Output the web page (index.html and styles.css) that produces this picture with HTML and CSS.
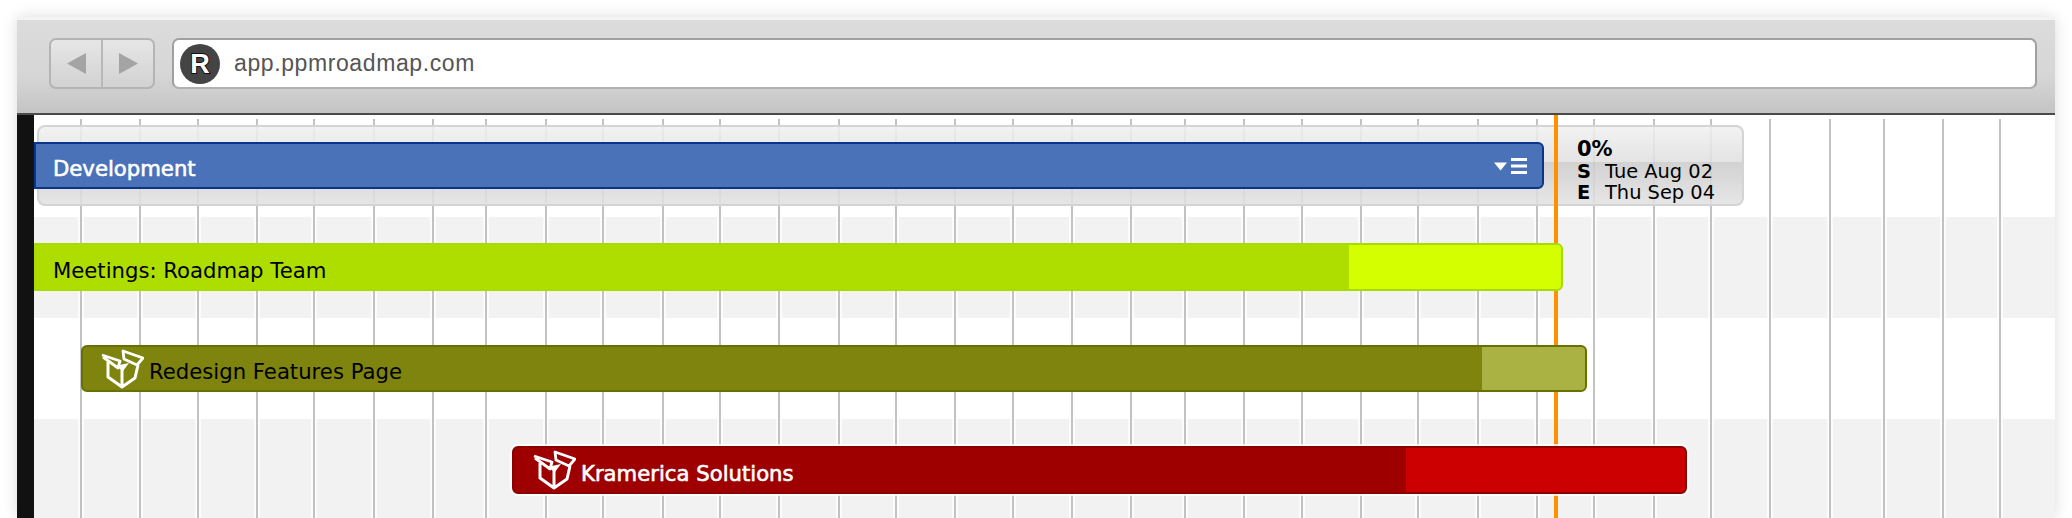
FILE: index.html
```html
<!DOCTYPE html>
<html lang="en">
<head>
  <meta charset="UTF-8" />
  <title>PPM Roadmap</title>
  <link rel="stylesheet" href="styles.css">
</head>
<body>

  <svg class="defs" width="0" height="0">
    <symbol id="box" viewBox="0 0 44 40">
      <path d="M8 13V28L22 38L35 29L38 16M22 20V38" fill="none" stroke="#fff" stroke-width="3" stroke-linejoin="round"/>
      <path d="M2 6L20 12L18 19L3 8M23 2L43 9L37 16L24 10Z" fill="none" stroke="#fff" stroke-width="2.800" stroke-linejoin="round"/>
      <path d="M15 17L29 14L23 22Z" fill="#fff"/>
    </symbol>
  </svg>

  <div class="window">

    <!-- Browser toolbar -->
    <div class="toolbar">
      <div class="nav">
        <button class="nav-btn"><svg width="19" height="21" viewBox="0 0 20 22"><path d="M20 0V22L0 11Z"/></svg></button>
        <button class="nav-btn"><svg width="19" height="21" viewBox="0 0 20 22"><path d="M0 0V22L20 11Z"/></svg></button>
      </div>
      <div class="address">
        <span class="logo">R</span>
        <span class="url">app.ppmroadmap.com</span>
      </div>
    </div>

    <div class="chart">
      <div class="rail"></div>

      <div class="rows">
        <!-- Week lines behind the bars -->
        <div class="gridlines">
          <i></i><i></i><i></i><i></i><i></i><i></i><i></i><i></i><i></i><i></i><i></i><i></i>
          <i></i><i></i><i></i><i></i><i></i><i></i><i></i><i></i><i></i><i></i><i></i><i></i>
          <i></i><i></i><i></i><i></i><i></i><i></i><i></i><i></i><i></i><i></i>
        </div>

        <!-- Today marker -->
        <div class="today"></div>

        <div class="row row-first">
          <div class="card">
            <div class="bar bar-dev">
              <div class="done">
                <span class="label">Development</span>
                <span class="menu">
                  <svg width="34" height="16" viewBox="0 0 34 16">
                    <path d="M0 4.500H13L6.500 12.500Z" fill="#fff"/>
                    <path d="M17 0H33V3H17ZM17 6.500H33V9.500H17ZM17 13H33V16H17Z" fill="#fff"/>
                  </svg>
                </span>
              </div>
            </div>
            <div class="info">
              <div class="pct">0%</div>
              <div class="date"><b>S</b><span>Tue Aug 02</span></div>
              <div class="date"><b>E</b><span>Thu Sep 04</span></div>
            </div>
          </div>
        </div>

        <div class="row row-alt row-meet">
          <div class="bar bar-meet">
            <div class="done"><span class="label">Meetings: Roadmap Team</span></div>
            <div class="rest"></div>
          </div>
        </div>

        <div class="row row-redesign">
          <div class="bar bar-redesign">
            <div class="done">
              <svg class="box" width="44" height="40"><use href="#box"/></svg>
              <span class="label">Redesign Features Page</span>
            </div>
            <div class="rest"></div>
          </div>
        </div>

        <div class="row row-alt row-kram">
          <div class="bar bar-kram">
            <div class="done">
              <svg class="box" width="44" height="40"><use href="#box"/></svg>
              <span class="label">Kramerica Solutions</span>
            </div>
            <div class="rest"></div>
          </div>
        </div>
      </div>
    </div>

  </div>

</body>
</html>
```

FILE: styles.css
```css
/* Page */
body {
  margin: 0;
  height: 518px;
  overflow: hidden;
  background-color: #fff;
  font-family: "DejaVu Sans", Verdana, sans-serif;
  color: #000;
}

.defs {
  position: absolute;
}

.window {
  margin: 17px 17px 0;
  border-top: 3px solid #f4f4f4;
  box-shadow: 0 0 14px rgba(0,0,0,0.14);
}

/* Browser toolbar */
.toolbar {
  display: flex;
  gap: 17px;
  height: 95px;
  box-sizing: border-box;
  padding: 18px 18px 0 32px;
  background: linear-gradient(#dcdcdc, #d6d6d6 60%, #c4c4c4);
  border-bottom: 2px solid #4a4a4a;
}

.nav {
  display: flex;
  width: 106px;
  height: 51px;
  box-sizing: border-box;
  border: 2px solid #b4b4b4;
  border-radius: 7px;
  background: linear-gradient(#e6e6e6, #d2d2d2);
}

.nav-btn {
  flex: 1;
  display: flex;
  align-items: center;
  justify-content: center;
  padding: 0;
  border: none;
  background: none;
}

.nav-btn + .nav-btn {
  border-left: 2px solid #b8b8b8;
}

.nav-btn svg {
  fill: #a4a4a4;
}

.address {
  flex: 1;
  display: flex;
  align-items: center;
  gap: 14px;
  height: 51px;
  box-sizing: border-box;
  padding-left: 6px;
  background-color: #fff;
  border: 2px solid #a0a0a0;
  border-bottom-color: #b0b0b0;
  border-radius: 7px;
}

.logo {
  width: 40px;
  height: 40px;
  border-radius: 50%;
  background-color: #444;
  color: #fff;
  font: bold 27px/40px "Liberation Sans", Arial, sans-serif;
  text-align: center;
  -webkit-text-stroke: 2px #111;
  paint-order: stroke fill;
}

.url {
  font: 23px "Liberation Sans", Helvetica, Arial, sans-serif;
  color: #555;
  letter-spacing: 0.6px;
}

/* Chart */
.chart {
  display: flex;
}

.rail {
  width: 17px;
  background-color: #111;
}

.rows {
  flex: 1;
  position: relative;
}

.row {
  box-sizing: border-box;
}

.row-alt {
  background-color: #f2f2f2;
}

.row-first {
  height: 102px;
  padding-top: 10px;
}

.row-meet {
  height: 101px;
  padding-top: 26px;
}

.row-redesign {
  height: 101px;
  padding-top: 27px;
}

.row-kram {
  height: 99px;
  padding-top: 27px;
}

/* Column lines: the gaps between weeks are not quite even */
.gridlines {
  position: absolute;
  top: 4px;
  left: 0;
  right: 0;
  bottom: 0;
  z-index: 1;
  display: grid;
  padding-left: 46px;
  grid-template-columns: 59px 58px 59px 57px 60px 59px 53px 60px 57px 60px 57px 59px 60px 57px 59px 58px 59px 59px 54px 59px 58px 59px 57px 60px 59px 57px 60px 57px 59px 60px 54px 59px 57px 1fr;
}

.gridlines i {
  width: 2px;
  background-color: #c2c2c2;
  box-shadow: 0 0 0 2px rgba(255,255,255,0.75);
}

.today {
  position: absolute;
  top: 0;
  bottom: 0;
  left: 1520px;
  width: 4px;
  background-color: #ff9000;
  z-index: 3;
}

/* Bars */
.bar {
  position: relative;
  z-index: 4;
  display: flex;
  box-sizing: border-box;
  overflow: hidden;
  border: 2px solid;
  border-radius: 0 6px 6px 0;
  font-size: 21.200px;
}

.done {
  display: flex;
  align-items: center;
  box-sizing: border-box;
}

.rest {
  flex: 1;
}

.label {
  padding-top: 6px;
}

.box {
  flex: none;
  margin-right: 5px;
}

.bar-dev {
  width: 1510px;
  height: 47px;
  margin: 15px 0 0 -5px;
  flex: none;
  border-color: #0c3488;
  background-color: #4a72b8;
  color: #fff;
  -webkit-text-stroke: 0.6px #fff;
}

.bar-dev .label {
  padding-top: 6px;
}

.bar-dev .done {
  flex: 1;
  justify-content: space-between;
  padding: 0 14px 0 17px;
}

.menu {
  display: flex;
}

.bar-meet {
  width: 1529px;
  height: 48px;
  border-color: #a8dc00;
  background-color: #aede00;
}

.bar-meet .done {
  width: 1313px;
  padding-left: 17px;
}

.bar-meet .rest {
  background-color: #d4ff00;
}

.bar-redesign {
  width: 1506px;
  height: 47px;
  margin-left: 47px;
  border-color: #687000;
  border-radius: 6px;
  background-color: #7e840e;
}

.bar-redesign .done {
  width: 1399px;
  padding-left: 17px;
}

.bar-redesign .rest {
  background-color: #a9b243;
}

.bar-kram {
  width: 1175px;
  height: 48px;
  margin-left: 478px;
  border-color: #8c0000;
  border-radius: 6px;
  background-color: #9e0000;
  color: #fff;
  -webkit-text-stroke: 0.6px #fff;
  box-shadow: 0 0 0 2px rgba(255,255,255,0.8);
}

.bar-kram .done {
  width: 892px;
  padding-left: 18px;
}

.bar-kram .rest {
  background-color: #cc0000;
}

/* Box behind the Development bar, with dates on the right */
.card {
  position: relative;
  z-index: 2;
  display: flex;
  height: 81px;
  margin-left: 3px;
  width: 1707px;
  box-sizing: border-box;
  border: 2px solid #d4d4d4;
  border-radius: 8px;
  background: linear-gradient(rgba(240,240,240,0.88), rgba(224,224,224,0.88) 45%, rgba(204,204,204,0.88) 46%, rgba(226,226,226,0.88));
}

.info {
  margin: 10px 0 0 33px;
  font-size: 19.400px;
  line-height: 21px;
}

.pct {
  font-weight: bold;
  font-size: 21px;
  line-height: 24px;
}

.date {
  display: flex;
}

.date b {
  width: 28px;
}
```
